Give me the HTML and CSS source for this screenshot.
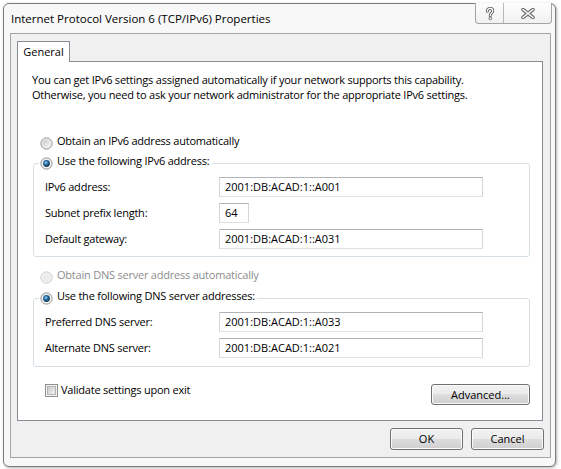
FILE: index.html
```html
<!DOCTYPE html>
<html lang="en">
<head>
<meta charset="utf-8">
<title>Internet Protocol Version 6 (TCP/IPv6) Properties</title>
<link rel="stylesheet" href="styles.css">
</head>
<body>
<svg class="defs" width="0" height="0" aria-hidden="true">
  <defs>
    <linearGradient id="gRadio" x1="0" y1="0" x2="1" y2="1">
      <stop offset="0" stop-color="#c9c9c9"/>
      <stop offset="1" stop-color="#f6f6f6"/>
    </linearGradient>
    <linearGradient id="gRing" x1="0" y1="0" x2="1" y2="1">
      <stop offset="0" stop-color="#e9e9e9"/>
      <stop offset="1" stop-color="#ffffff"/>
    </linearGradient>
    <radialGradient id="gDot" cx="0.42" cy="0.38" r="0.62">
      <stop offset="0" stop-color="#9fd8fb"/>
      <stop offset="0.45" stop-color="#2a70a4"/>
      <stop offset="1" stop-color="#0e3150"/>
    </radialGradient>
    <linearGradient id="gCheck" x1="0" y1="0" x2="1" y2="1">
      <stop offset="0" stop-color="#c8c8c8"/>
      <stop offset="1" stop-color="#f5f5f5"/>
    </linearGradient>
  </defs>
</svg>

<div class="window">
  <div class="titlebar">
    <span class="title">Internet Protocol Version 6 (TCP/IPv6) Properties</span>
    <div class="caption-btns">
      <span class="cap cap-help">
        <svg width="10" height="14" viewBox="0 0 10 14">
          <path d="M2.3 4.3 C2.3 2.4 3.6 1.4 5 1.4 C6.6 1.4 7.7 2.4 7.7 3.9 C7.7 5.7 5.3 6.2 5.3 8.4" fill="none" stroke="#6b6b6b" stroke-width="3.1" stroke-linecap="round"/>
          <path d="M2.3 4.3 C2.3 2.4 3.6 1.4 5 1.4 C6.6 1.4 7.7 2.4 7.7 3.9 C7.7 5.7 5.3 6.2 5.3 8.4" fill="none" stroke="#ffffff" stroke-width="1.2" stroke-linecap="round"/>
          <circle cx="5.3" cy="11.4" r="1.4" fill="#fff" stroke="#6b6b6b" stroke-width="1"/>
        </svg>
      </span>
      <span class="cap cap-close">
        <svg width="14" height="11" viewBox="0 0 14 11">
          <path d="M2 1.5 L12 9.5 M12 1.5 L2 9.5" stroke="#6a6a6a" stroke-width="3.6" stroke-linecap="round"/>
          <path d="M2 1.5 L12 9.5 M12 1.5 L2 9.5" stroke="#ffffff" stroke-width="1.6" stroke-linecap="round"/>
        </svg>
      </span>
    </div>
  </div>

  <div class="client">
    <div class="tabstrip"><span class="tab">General</span></div>
    <div class="panel">
      <p class="desc">You can get IPv6 settings assigned automatically if your network supports this capability.<br>Otherwise, you need to ask your network administrator for the appropriate IPv6 settings.</p>

      <div class="opt opt-first">
        <svg class="radio" width="13" height="13" viewBox="0 0 13 13"><circle cx="6.5" cy="6.5" r="5.6" fill="#f3f3f3" stroke="#8e8f8f"/><circle cx="6.5" cy="6.5" r="4" fill="url(#gRadio)"/></svg>
        <span>Obtain an IPv6 address automatically</span>
      </div>

      <fieldset class="group group-ip">
        <legend class="legend">
          <span class="opt">
            <svg class="radio" width="13" height="13" viewBox="0 0 13 13"><circle cx="6.5" cy="6.5" r="5.6" fill="url(#gRing)" stroke="#8e8f8f"/><circle cx="6.5" cy="6.5" r="3.4" fill="url(#gDot)"/></svg>
            <span>Use the following IPv6 address:</span>
          </span>
        </legend>
        <div class="field"><span class="lbl">IPv6 address:</span><span class="input input-wide">2001:DB:ACAD:1::A001</span></div>
        <div class="field"><span class="lbl">Subnet prefix length:</span><span class="input input-short">64</span></div>
        <div class="field"><span class="lbl">Default gateway:</span><span class="input input-wide">2001:DB:ACAD:1::A031</span></div>
      </fieldset>

      <div class="opt opt-dns disabled">
        <svg class="radio" width="13" height="13" viewBox="0 0 13 13"><circle cx="6.5" cy="6.5" r="5.6" fill="#f6f6f6" stroke="#c8c8c8"/><circle cx="6.5" cy="6.5" r="4" fill="#ececec"/></svg>
        <span>Obtain DNS server address automatically</span>
      </div>

      <fieldset class="group group-dns">
        <legend class="legend">
          <span class="opt">
            <svg class="radio" width="13" height="13" viewBox="0 0 13 13"><circle cx="6.5" cy="6.5" r="5.6" fill="url(#gRing)" stroke="#8e8f8f"/><circle cx="6.5" cy="6.5" r="3.4" fill="url(#gDot)"/></svg>
            <span>Use the following DNS server addresses:</span>
          </span>
        </legend>
        <div class="field"><span class="lbl">Preferred DNS server:</span><span class="input input-wide">2001:DB:ACAD:1::A033</span></div>
        <div class="field"><span class="lbl">Alternate DNS server:</span><span class="input input-wide">2001:DB:ACAD:1::A021</span></div>
      </fieldset>

      <div class="footer-row">
        <span class="check">
          <svg class="checkbox" width="13" height="13" viewBox="0 0 13 13"><rect x="0.5" y="0.5" width="12" height="12" fill="#f4f4f4" stroke="#8e8f8f"/><rect x="2.5" y="2.5" width="8" height="8" fill="url(#gCheck)" stroke="#b4b4b4"/></svg>
          <span>Validate settings upon exit</span>
        </span>
        <button class="btn btn-adv" type="button">Advanced...</button>
      </div>
    </div>

    <div class="dlg-buttons">
      <button class="btn btn-dlg" type="button">OK</button>
      <button class="btn btn-dlg" type="button">Cancel</button>
    </div>
  </div>
</div>
</body>
</html>
```

FILE: styles.css
```css
* {
  box-sizing: border-box;
}

html, body {
  margin: 0;
  padding: 0;
}

body {
  width: 561px;
  height: 469px;
  overflow: hidden;
  background: #ffffff;
  font-family: "Open Sans", "Noto Sans", sans-serif;
  font-size: 11px;
  color: #000000;
}

.defs {
  display: block;
  width: 0;
  height: 0;
  overflow: hidden;
}

/* window frame */
.window {
  margin: 3px 0 0 3px;
  width: 553px;
  height: 464px;
  border: 1px solid #7c7c7c;
  border-radius: 6px;
  background: #f8f8f8;
  box-shadow: 1px 1px 3px rgba(0, 0, 0, 0.3);
  display: flex;
  flex-direction: column;
}

.titlebar {
  height: 29px;
  display: flex;
  align-items: center;
  padding-left: 7px;
}

.title {
  font-size: 11.5px;
  line-height: 16px;
  color: #000;
}

.caption-btns {
  margin-left: auto;
  margin-right: 3px;
  margin-top: -1px;
  align-self: flex-start;
  height: 21px;
  display: flex;
  border: 1px solid #a3a3a3;
  border-top: none;
  border-radius: 0 0 4px 4px;
  background: linear-gradient(#fdfdfd, #f1f1f1);
}

.cap {
  display: flex;
  align-items: center;
  justify-content: center;
  height: 100%;
}

.cap-help {
  width: 27px;
  padding-top: 1px;
}

.cap-close {
  width: 48px;
  border-left: 1px solid #b9b9b9;
}

/* client area */
.client {
  margin: 0 4px 8px 6px;
  height: 425px;
  border: 1px solid #a5a5a5;
  background: #f0f0f0;
  display: flex;
  flex-direction: column;
}

.tabstrip {
  margin: 7px 0 0 6px;
  display: flex;
  position: relative;
  z-index: 1;
}

.tab {
  width: 53px;
  height: 21px;
  margin-bottom: -1px;
  border: 1px solid #898c95;
  border-bottom: none;
  background: #ffffff;
  text-align: center;
  line-height: 19px;
}

.panel {
  margin: 0 7px 0 6px;
  width: 526px;
  height: 360px;
  border: 1px solid #898c95;
  background: #ffffff;
  display: flex;
  flex-direction: column;
  letter-spacing: -0.22px;
}

.desc {
  margin: 10px 0 0 14px;
  line-height: 15px;
  white-space: nowrap;
}

.opt {
  display: flex;
  align-items: flex-start;
  height: 16px;
  line-height: 16px;
  white-space: nowrap;
}

.radio,
.checkbox {
  flex: none;
  margin-top: 4px;
  margin-right: 4px;
  display: block;
}

.opt-first {
  margin: 31px 0 0 22px;
}

.opt-dns {
  margin: 10px 0 0 22px;
}

.disabled {
  color: #8d8d8d;
}

/* group boxes */
.group {
  margin: 0 12px 0 15px;
  min-width: 0;
  border: 1px solid #d5dfe5;
  border-radius: 3px;
  padding: 3px 0 7px 5px;
}

.group-ip {
  margin-top: 4px;
}

.group-dns {
  margin-top: 5px;
  padding-bottom: 8px;
}

.legend {
  padding: 0 2px 5px 1px;
}

.field {
  display: flex;
  align-items: center;
  height: 20px;
  margin-left: 6px;
  line-height: 16px;
}

.field + .field {
  margin-top: 6px;
}

.lbl {
  width: 174px;
  flex: none;
}

.input {
  height: 20px;
  border: 1px solid;
  border-color: #b0b3b8 #d3d6db #dde1e6 #d3d6db;
  background: #ffffff;
  padding-left: 5px;
  line-height: 18px;
  white-space: nowrap;
  letter-spacing: 0;
}

.input-wide {
  width: 264px;
}

.input-short {
  width: 30px;
}

/* bottom of the tab page */
.footer-row {
  margin: 14px 12px 0 27px;
  display: flex;
  justify-content: space-between;
  align-items: flex-start;
}

.check {
  display: flex;
  align-items: flex-start;
  line-height: 16px;
  height: 17px;
  padding-top: 1px;
}

.check .checkbox {
  margin-right: 3px;
  margin-top: 2px;
}

.btn {
  font-family: inherit;
  font-size: 11px;
  letter-spacing: 0;
  color: #000;
  border: 1px solid #707070;
  border-radius: 3px;
  background: linear-gradient(#f2f2f2 0%, #ebebeb 50%, #dddddd 50%, #cfcfcf 100%);
  box-shadow: inset 0 0 0 1px #fbfbfb;
  padding: 0;
  line-height: 18px;
  text-align: center;
}

.btn-adv {
  width: 99px;
  height: 21px;
  margin-top: 3px;
}

.dlg-buttons {
  margin: 7px 6px 0 0;
  display: flex;
  justify-content: flex-end;
  gap: 8px;
}

.btn-dlg {
  width: 73px;
  height: 22px;
}
```
